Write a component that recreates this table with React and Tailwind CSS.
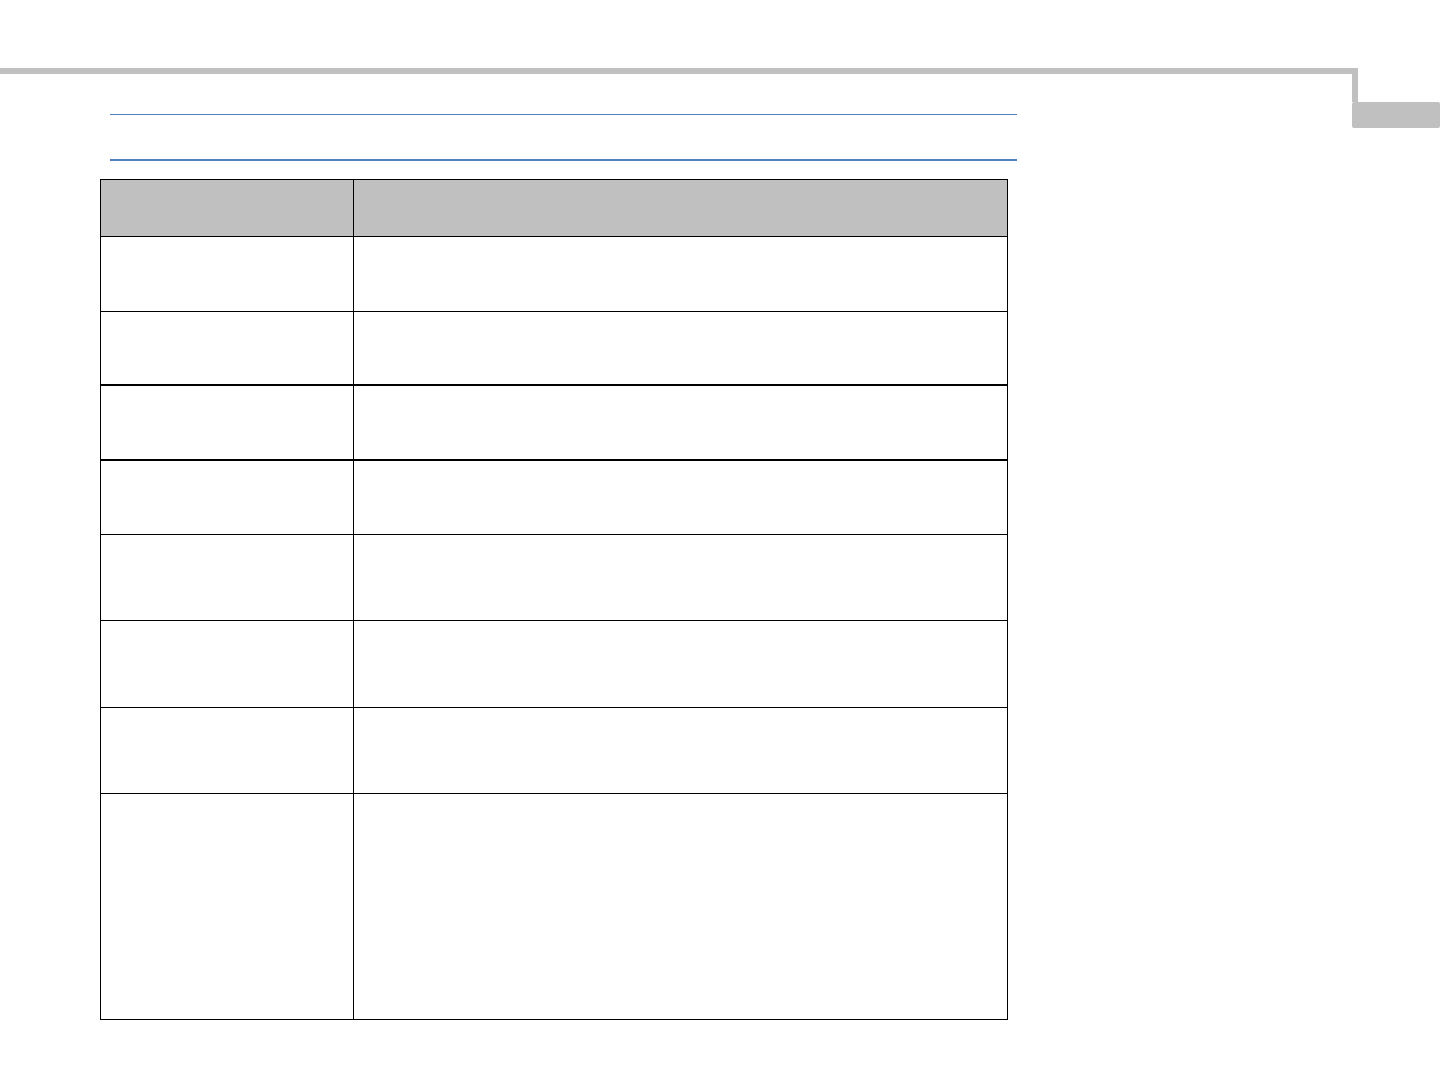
export default function App() {
  const rows = [
    { h: 'h-[75px]', t: 'border-t' },
    { h: 'h-[73px]', t: 'border-t' },
    { h: 'h-[75px]', t: 'border-t-2' },
    { h: 'h-[75px]', t: 'border-t-2' },
    { h: 'h-[86px]', t: 'border-t' },
    { h: 'h-[87px]', t: 'border-t' },
    { h: 'h-[86px]', t: 'border-t' },
  ];
  return (
    <div className="w-[1440px] h-[1080px] bg-white flex" style={{ fontFamily: '"Liberation Sans", Arial, sans-serif' }}>
      <div className="w-[1352px] pt-[68px] flex flex-col">
        <div className="h-[6px] w-full bg-[#c0c0c0]" />
        <div className="mt-[40px] ml-[110px] w-[907px] h-px bg-[#4f81bd]" />
        <div className="mt-[44px] ml-[110px] w-[907px] h-[2px] bg-[#4f81bd]" />
        <div className="mt-[18px] ml-[100px] w-[908px] flex flex-col">
          <div className="h-[57px] flex border-t border-l border-r border-black bg-[#c0c0c0]">
            <div className="w-[253px] border-r border-black" />
            <div className="flex-1" />
          </div>
          {rows.map((r, i) => (
            <div key={i} className={`${r.h} ${r.t} flex border-l border-r border-black`}>
              <div className="w-[253px] border-r border-black" />
              <div className="flex-1" />
            </div>
          ))}
          <div className="h-[227px] flex border border-black">
            <div className="w-[253px] border-r border-black" />
            <div className="flex-1" />
          </div>
        </div>
      </div>
      <div className="w-[88px] pt-[68px] flex flex-col">
        <div className="w-[6px] h-[34px] bg-[#c0c0c0] rounded-tr-[1px]" />
        <div className="w-[88px] h-[26px] bg-[#c0c0c0] rounded-[2px]" />
      </div>
    </div>
  );
}
